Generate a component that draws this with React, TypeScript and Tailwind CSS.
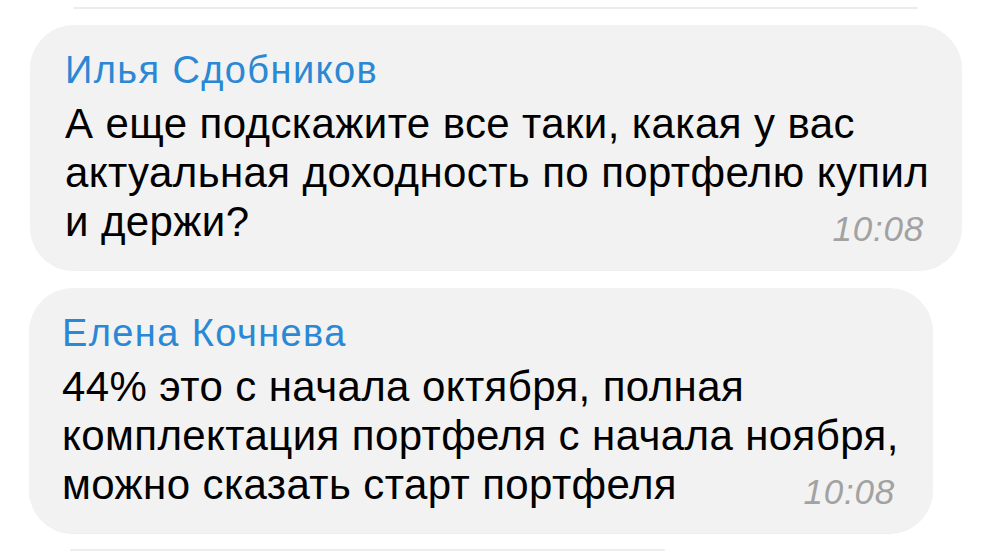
import React from "react";

type Msg = {
  name: string;
  lines: string[];
  time: string;
  width: string;
  ml: string;
  px: string;
};

function Bubble({ m }: { m: Msg }) {
  const last = m.lines[m.lines.length - 1];
  const rest = m.lines.slice(0, -1);
  return (
    <div
      className={`${m.width} ${m.ml} ${m.px} h-[245px] rounded-[44px] bg-[#f2f2f2] shadow-[0_1px_1px_rgba(0,0,0,0.07)] pt-[25px]`}
    >
      <div className="text-[38px] leading-[40px] tracking-[1.4px] text-[#2b88d4]">{m.name}</div>
      <div className="mt-[9px] text-[42px] leading-[49px] tracking-[0.4px] text-black">
        {rest.map((l, i) => (
          <div key={i} className="whitespace-nowrap">
            {l}
          </div>
        ))}
        <div className="flex items-baseline justify-between whitespace-nowrap">
          <span>{last}</span>
          <span className="translate-y-[5px] text-[35px] tracking-[0.8px] italic text-[#a2a2a2]">{m.time}</span>
        </div>
      </div>
    </div>
  );
}

export default function App() {
  const msgs: Msg[] = [
    {
      name: "Илья Сдобников",
      lines: [
        "А еще подскажите все таки, какая у вас",
        "актуальная доходность по портфелю купил",
        "и держи?",
      ],
      time: "10:08",
      width: "w-[932px]",
      ml: "ml-[30px]",
      px: "pl-[35px] pr-[38px]",
    },
    {
      name: "Елена Кочнева",
      lines: [
        "44% это с начала октября, полная",
        "комплектация портфеля с начала ноября,",
        "можно сказать старт портфеля",
      ],
      time: "10:08",
      width: "w-[904px]",
      ml: "ml-[29px]",
      px: "pl-[33px] pr-[38px]",
    },
  ];
  return (
    <div
      className="w-[995px] h-[552px] overflow-hidden bg-white flex flex-col"
      style={{ fontFamily: '"Liberation Sans", Arial, sans-serif' }}
    >
      <div className="mt-[7px] ml-[73px] w-[845px] h-[2px] bg-[#ececec] rounded-full" />
      <div className="mt-[16px]">
        <Bubble m={msgs[0]} />
      </div>
      <div className="mt-[18px]">
        <Bubble m={msgs[1]} />
      </div>
      <div className="mt-[16px] ml-[70px] w-[595px] h-[2px] bg-[#ececec] rounded-full" />
    </div>
  );
}
